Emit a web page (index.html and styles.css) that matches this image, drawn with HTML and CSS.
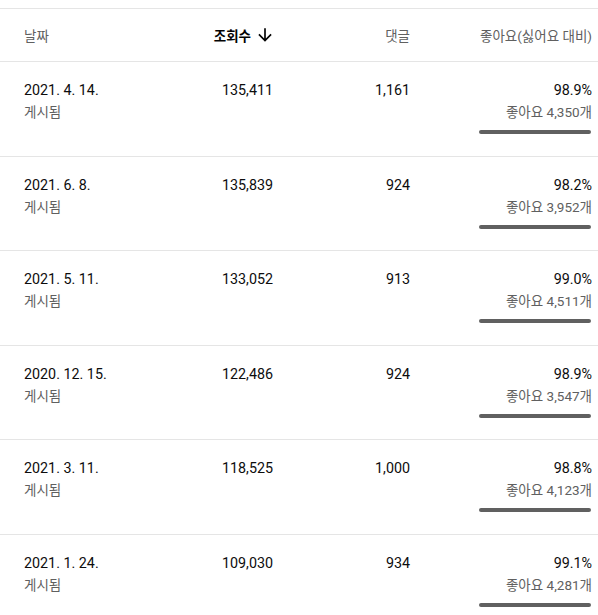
FILE: index.html
```html
<!DOCTYPE html>
<html lang="ko">
<head>
<meta charset="UTF-8">
<meta name="viewport" content="width=device-width, initial-scale=1.0">
<title>동영상 목록</title>
<link rel="stylesheet" href="styles.css">
</head>
<body>
<div class="table">
  <div class="row head">
    <div class="cell">날짜</div>
    <div class="cell num sorted">조회수
      <svg class="arrow" viewBox="0 0 24 24" width="20" height="20"><path d="M20 12l-1.41-1.41L13 16.17V4h-2v12.17l-5.58-5.59L4 12l8 8 8-8z"/></svg>
    </div>
    <div class="cell num">댓글</div>
    <div class="cell num">좋아요(싫어요 대비)</div>
  </div>

  <div class="row">
    <div class="cell"><div class="main">2021. 4. 14.</div><div class="sub">게시됨</div></div>
    <div class="cell num"><div class="main">135,411</div></div>
    <div class="cell num"><div class="main">1,161</div></div>
    <div class="cell num"><div class="main">98.9%</div><div class="sub">좋아요 4,350개</div><div class="bar"></div></div>
  </div>

  <div class="row">
    <div class="cell"><div class="main">2021. 6. 8.</div><div class="sub">게시됨</div></div>
    <div class="cell num"><div class="main">135,839</div></div>
    <div class="cell num"><div class="main">924</div></div>
    <div class="cell num"><div class="main">98.2%</div><div class="sub">좋아요 3,952개</div><div class="bar"></div></div>
  </div>

  <div class="row">
    <div class="cell"><div class="main">2021. 5. 11.</div><div class="sub">게시됨</div></div>
    <div class="cell num"><div class="main">133,052</div></div>
    <div class="cell num"><div class="main">913</div></div>
    <div class="cell num"><div class="main">99.0%</div><div class="sub">좋아요 4,511개</div><div class="bar"></div></div>
  </div>

  <div class="row">
    <div class="cell"><div class="main">2020. 12. 15.</div><div class="sub">게시됨</div></div>
    <div class="cell num"><div class="main">122,486</div></div>
    <div class="cell num"><div class="main">924</div></div>
    <div class="cell num"><div class="main">98.9%</div><div class="sub">좋아요 3,547개</div><div class="bar"></div></div>
  </div>

  <div class="row">
    <div class="cell"><div class="main">2021. 3. 11.</div><div class="sub">게시됨</div></div>
    <div class="cell num"><div class="main">118,525</div></div>
    <div class="cell num"><div class="main">1,000</div></div>
    <div class="cell num"><div class="main">98.8%</div><div class="sub">좋아요 4,123개</div><div class="bar"></div></div>
  </div>

  <div class="row">
    <div class="cell"><div class="main">2021. 1. 24.</div><div class="sub">게시됨</div></div>
    <div class="cell num"><div class="main">109,030</div></div>
    <div class="cell num"><div class="main">934</div></div>
    <div class="cell num"><div class="main">99.1%</div><div class="sub">좋아요 4,281개</div><div class="bar"></div></div>
  </div>
</div>
</body>
</html>
```

FILE: styles.css
```css
body {
  margin: 0;
  background: #fff;
  font-family: Roboto, "Noto Sans CJK KR", sans-serif;
  color: #0d0d0d;
}

.table {
  margin-top: 8px;
  border-top: 1px solid #e5e5e5;
}

.row {
  display: grid;
  grid-template-columns: 129px 120px 137px 182px;
  padding: 0 6px 0 24px;
  height: 93.5px;
  border-bottom: 1px solid #e5e5e5;
}

.row.head {
  height: 52px;
  align-items: center;
  font-size: 13.5px;
  color: #606060;
}

.cell {
  display: flex;
  flex-direction: column;
  align-items: flex-start;
}

.cell.num {
  align-items: flex-end;
}

.row.head .cell.num {
  flex-direction: row;
  justify-content: flex-end;
  align-items: center;
}

.sorted {
  color: #030303;
  font-weight: 700;
}

.arrow {
  fill: #030303;
  margin-left: 4px;
  margin-right: -2px;
}

.row:not(.head) .cell {
  padding-top: 18px;
}

.main {
  font-size: 14.3px;
  line-height: 20px;
}

.sub {
  font-size: 13.5px;
  line-height: 18px;
  margin-top: 3px;
  color: #606060;
}

.bar {
  width: 112px;
  height: 4px;
  margin-top: 9px;
  margin-right: 1px;
  border-radius: 2px;
  background: #606060;
}
```
